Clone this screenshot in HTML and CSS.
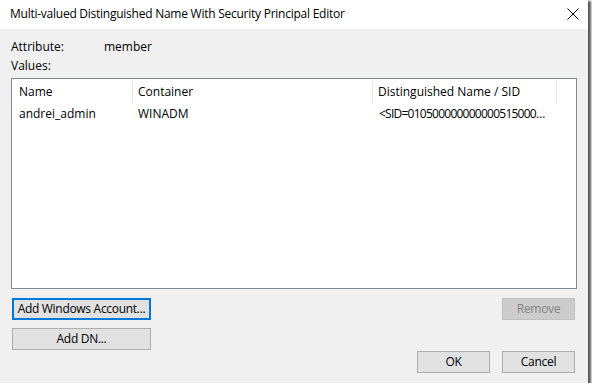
FILE: index.html
```html
<!DOCTYPE html>
<html>
<head>
<meta charset="utf-8">
<link rel="stylesheet" href="styles.css">
</head>
<body>
<div class="window">
  <div class="titlebar">
    <span class="title">Multi-valued Distinguished Name With Security Principal Editor</span>
    <svg class="close" width="12" height="12" viewBox="0 0 12 12"><path d="M0.5 0.5 L11.5 11.5 M11.5 0.5 L0.5 11.5" stroke="#000" stroke-width="1" fill="none"/></svg>
  </div>
  <div class="content">
    <div class="field">
      <span class="label">Attribute:</span>
      <span class="value">member</span>
    </div>
    <div class="field values-label">Values:</div>
    <div class="listbox">
      <div class="lv-row lv-header">
        <div class="cell c1">Name</div>
        <div class="cell c2">Container</div>
        <div class="cell c3">Distinguished Name / SID</div>
        <div class="cell c4"></div>
      </div>
      <div class="lv-row lv-item">
        <div class="cell c1">andrei_admin</div>
        <div class="cell c2">WINADM</div>
        <div class="cell c3 sid">&lt;SID=010500000000000515000…</div>
      </div>
    </div>
    <div class="btn-row">
      <button class="btn wide default">Add Windows Account...</button>
      <button class="btn small disabled">Remove</button>
    </div>
    <div class="btn-row second">
      <button class="btn wide">Add DN...</button>
    </div>
    <div class="btn-row footer">
      <button class="btn small">OK</button>
      <button class="btn small">Cancel</button>
    </div>
  </div>
</div>
</body>
</html>
```

FILE: styles.css
```css
html, body {
  margin: 0;
  padding: 0;
  background: #ffffff;
}
body {
  font-family: "Open Sans", "Noto Sans", "Liberation Sans", sans-serif;
  font-size: 12px;
  color: #000;
}
.window {
  width: 588px;
  height: 383px;
  display: flex;
  flex-direction: column;
  box-shadow: 2px 2px 2px 1px rgba(0,0,0,0.65);
  background: #f0f0f0;
}
.titlebar {
  height: 29px;
  background: #ffffff;
  display: flex;
  align-items: center;
  justify-content: space-between;
  padding: 0 9px 0 10px;
}
.title {
  font-size: 12px;
  letter-spacing: -0.25px;
  position: relative;
  top: -1px;
}
.close {
  position: relative;
  top: -1px;
}
.content {
  flex: 1;
  display: flex;
  flex-direction: column;
  padding: 10px 11px 0 11px;
}
.field {
  display: flex;
  height: 13px;
  line-height: 13px;
  margin-top: 1px;
}
.label {
  width: 93px;
}
.values-label {
  margin-top: 6px;
}
.listbox {
  margin-top: 6px;
  height: 209px;
  border: 1px solid #828790;
  background: #ffffff;
  display: flex;
  flex-direction: column;
}
.lv-row {
  display: grid;
  grid-template-columns: 121px 240px 184px 20px;
}
.lv-header {
  height: 25px;
}
.lv-header .cell {
  border-right: 1px solid #e5e5e5;
  margin: 2px 0 1px 0;
  height: 22px;
  line-height: 22px;
}
.lv-header .c4 {
  border-right: none;
}
.cell {
  padding-left: 5px;
  white-space: nowrap;
  overflow: hidden;
}
.c1 {
  padding-left: 7px;
}
.lv-item {
  height: 19px;
  line-height: 19px;
}
.lv-item .sid {
  padding-left: 6px;
  letter-spacing: -0.75px;
  overflow: visible;
}
.btn-row {
  display: flex;
  justify-content: space-between;
  margin-top: 9px;
  margin-right: 2px;
}
.btn-row.second {
  margin-top: 8px;
}
.btn-row.footer {
  justify-content: flex-end;
  gap: 12px;
  margin-top: 1px;
}
.btn {
  font-family: inherit;
  font-size: 12px;
  letter-spacing: -0.3px;
  height: 22px;
  margin: 0;
  padding: 0;
  background: #e1e1e1;
  border: 1px solid #adadad;
  color: #000;
  line-height: 18px;
  white-space: nowrap;
}
.btn.wide {
  width: 139px;
  margin-left: 1px;
}
.btn.small {
  width: 73px;
}
.btn.default {
  border: 2px solid #0078d7;
}
.btn.disabled {
  background: #cccccc;
  border-color: #bfbfbf;
  color: #838383;
}
```
